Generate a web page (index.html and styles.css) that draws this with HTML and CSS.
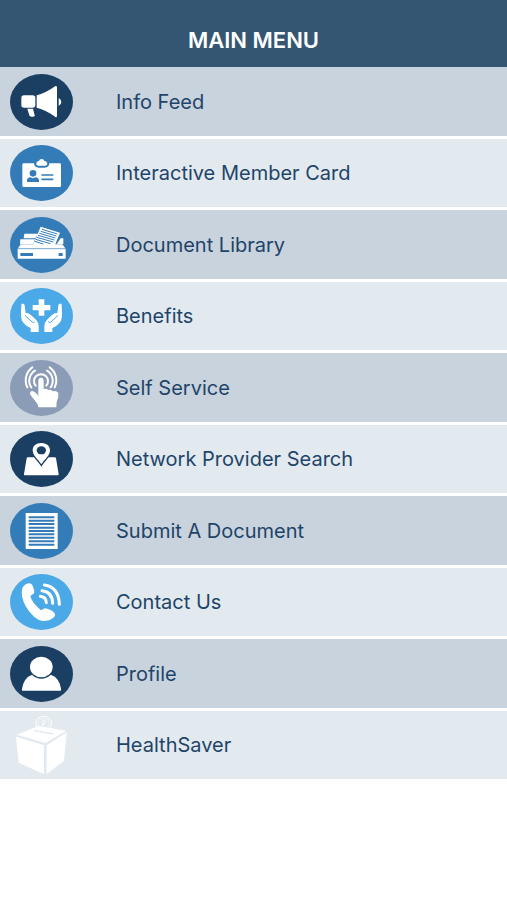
FILE: index.html
```html
<!DOCTYPE html>
<html lang="en">

<head>
  <meta charset="UTF-8">
  <title>Main Menu</title>
  <meta name="viewport" content="width=device-width, initial-scale=1">
  <link rel="stylesheet" href="styles.css">
</head>

<body>
  <header class="header">
    <h1>MAIN MENU</h1>
  </header>
  <nav>
    <ul class="menu">
      <li>
        <a href="#info-feed">
          <svg class="icon navy" viewBox="30 23 189 168" aria-hidden="true">
            <rect x="64" y="87" width="42" height="37" rx="8" />
            <path d="M110 87Q140 78 163 61Q170 56 171 63V149Q170 156 163 150Q140 132 110 124Z" />
            <path d="M176 95Q184 99 184 107T176 119Z" />
            <path d="M82 127H99L104 147Q104 151 100 151H94Q90 151 88 147Z" />
          </svg>
          <span>Info Feed</span>
        </a>
      </li>
      <li>
        <a href="#member-card">
          <svg class="icon blue" viewBox="30 21 189 168" aria-hidden="true">
            <path d="M71 76H102Q103 89 116 89H134Q147 89 148 76H179Q183 76 183 80V143Q183 147 179 147H71Q67 147 67 143V80Q67 76 71 76Z" />
            <path d="M109 78Q109 70 117 69Q118 63 125 63T133 69Q142 70 142 78Q141 83 135 83H115Q109 83 109 78Z" />
            <circle class="cut" cx="99" cy="106" r="10" />
            <path class="cut" d="M81 132V127Q82 119 91 118Q99 123 107 118Q116 119 117 127V132Z" />
            <path class="cut-line" d="M126 111H158M126 124H158" stroke-width="5" stroke-linecap="round" />
          </svg>
          <span>Interactive Member Card</span>
        </a>
      </li>
      <li>
        <a href="#library">
          <svg class="icon blue" viewBox="30 26 189 168" aria-hidden="true">
            <path d="M73 76H114L106 90H71ZM61 93H105L100 107H60ZM182 90H190V107H170ZM53 121L62 108H187L197 121V151H53Z" />
            <path d="M122 55L180 73L164 112H98Z" />
            <path class="cut-line" d="M126 63L172 77M122 69L169 83M118 75L166 89M114 81L163 95M110 87L160 101M107 93L151 106M104 99L130 107" stroke-width="3" />
            <path class="cut-line" d="M53 121H197" stroke-width="2" />
            <path class="cut" d="M61 134H99V143H61ZM176 134H188V143H176Z" />
          </svg>
          <span>Document Library</span>
        </a>
      </li>
      <li>
        <a href="#benefits">
          <svg class="icon sky" viewBox="30 25 189 168" aria-hidden="true">
            <path d="M116 59H133V76H151V92H133V108H116V92H98V76H116Z" />
            <g id="hand">
              <path d="M64 75Q65 71 69 72T74 77L77 100Q86 99 93 106L108 120Q116 128 116 140V157H92V145Q75 138 66 123Q62 115 63 101Z" />
              <path class="cut-line" d="M76 108L96 127Q101 131 104 127" stroke-width="3" stroke-linecap="round" />
            </g>
            <use href="#hand" transform="matrix(-1 0 0 1 249 0)" />
          </svg>
          <span>Benefits</span>
        </a>
      </li>
      <li>
        <a href="#self-service">
          <svg class="icon grey" viewBox="30 24 189 168" aria-hidden="true">
            <path class="line" d="M107 101A21 21 0 1 1 139 101M94 106A35 35 0 0 1 105 56M152 106A35 35 0 0 0 141 56M82 106A48 48 0 0 1 97 46M164 106A48 48 0 0 0 149 46" stroke-width="6" stroke-linecap="round" />
            <path class="halo" d="M115 86Q116 77 123 77T131 86V111Q140 108 145 114Q153 111 158 118Q169 114 175 123Q177 135 170 151L169 166H115L112 155L91 128Q88 119 96 117Q103 117 115 131Z" />
          </svg>
          <span>Self Service</span>
        </a>
      </li>
      <li>
        <a href="#providers">
          <svg class="icon navy" viewBox="30 21 189 168" aria-hidden="true">
            <path d="M83 100H164Q167 100 168 103L176 150Q176 154 173 154H74Q71 154 72 150L80 103Q81 100 83 100Z" />
            <path class="halo" d="M124 57C108 57 98 66 98 79C98 94 112 104 124 121C136 104 150 94 150 79C150 66 140 57 124 57Z" />
            <ellipse class="cut" cx="124" cy="79" rx="14" ry="12" />
          </svg>
          <span>Network Provider Search</span>
        </a>
      </li>
      <li>
        <a href="#submit">
          <svg class="icon blue" viewBox="30 24 189 168" aria-hidden="true">
            <rect x="77" y="54" width="96" height="108" />
            <path class="cut-line" d="M86 67H163M86 77H163M86 87H163M86 98H163M86 108H163M86 118H163M86 128H163M86 139H163M86 149H163" stroke-width="6" />
          </svg>
          <span>Submit A Document</span>
        </a>
      </li>
      <li>
        <a href="#contact">
          <svg class="icon sky" viewBox="30 25 189 168" aria-hidden="true">
            <path d="M70 62Q81 50 93 54Q98 56 102 73Q105 83 98 86L91 91Q95 110 121 132Q125 134 130 130Q135 126 142 129Q158 134 164 143Q168 150 159 157Q147 167 128 166Q101 161 78 123Q60 92 67 68Z" />
            <path class="line" d="M121 92Q138 94 139 111M126 75Q157 78 158 113M133 58Q176 64 178 116" stroke-width="9" stroke-linecap="round" />
          </svg>
          <span>Contact Us</span>
        </a>
      </li>
      <li>
        <a href="#profile">
          <svg class="icon navy" viewBox="30 24 189 168" aria-hidden="true">
            <path d="M67 158Q65 158 66 152Q72 119 95 111H154Q177 119 183 152Q184 158 182 158Z" />
            <ellipse class="halo" cx="124" cy="87" rx="34" ry="31" />
          </svg>
          <span>Profile</span>
        </a>
      </li>
      <li>
        <a href="#healthsaver">
          <svg class="icon plain" viewBox="30 27 189 168" aria-hidden="true">
            <path d="M51 80L115 54L199 68L136 105Z" />
            <path d="M48 86L132 112V199L56 164ZM140 112L200 73L192 158L140 199Z" />
            <path class="cut-line" d="M101 67L158 78" stroke-width="4" />
            <ellipse class="line" cx="131" cy="46" rx="24" ry="21" stroke-width="3" />
            <ellipse class="line" cx="131" cy="46" rx="17" ry="15" stroke-width="2" />
            <path class="line" d="M128 55V37H135Q139 38 138 43Q137 46 129 46M124 50H134" stroke-width="2" />
          </svg>
          <span>HealthSaver</span>
        </a>
      </li>
    </ul>
  </nav>
</body>

</html>
```
FILE: styles.css
```css
body {
  font-family: Inter, "Liberation Sans", Arial, sans-serif;
  background: #fff;
  margin: 0;
}

.header {
  background: #345673;
  color: #fff;
  text-align: center;
  padding: 28px 16px 15px;
}

.header h1 {
  font-size: 22px;
  line-height: 24px;
  font-weight: 600;
  margin: 0;
}

.menu {
  display: flex;
  flex-direction: column;
  gap: 3px;
  list-style: none;
  margin: 0;
  padding: 0;
}

.menu a {
  display: flex;
  align-items: center;
  gap: 43px;
  padding: 6px 10px;
  background: #e2eaef;
  color: #1f4469;
  font-size: 20px;
  line-height: 24px;
  text-decoration: none;
}

.menu li:nth-child(odd) a {
  background: #c8d3dd;
  padding: 7px 10px 6px;
}

.icon {
  flex: none;
  width: 63px;
  height: 56px;
  border-radius: 50%;
  background: var(--disc);
  fill: #fff;
}

.navy {
  --disc: #1b3f63;
}

.blue {
  --disc: #347cb7;
}

.sky {
  --disc: #4ba9e7;
}

.grey {
  --disc: #8b9cb7;
}

.plain {
  --disc: #e2eaef;
  background: none;
  border-radius: 0;
  overflow: visible;
}

.cut {
  fill: var(--disc);
}

.cut-line {
  fill: none;
  stroke: var(--disc);
}

.line {
  fill: none;
  stroke: #fff;
}

.halo {
  stroke: var(--disc);
  stroke-width: 8px;
  paint-order: stroke;
}
```
